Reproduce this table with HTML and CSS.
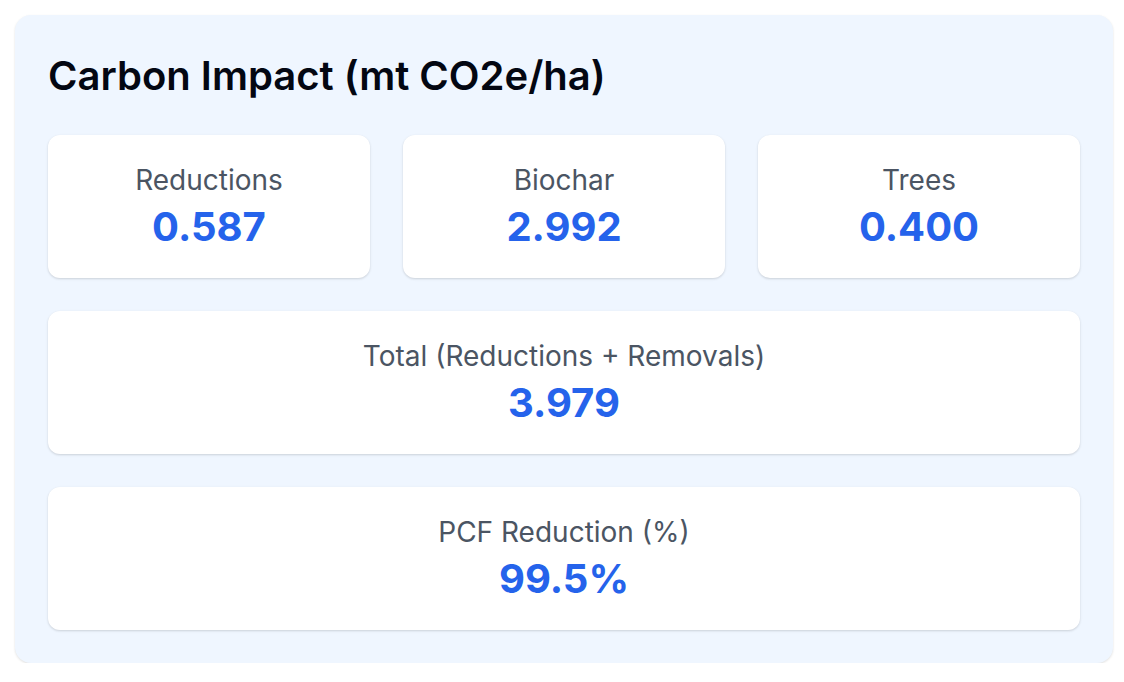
FILE: index.html
```html
<!DOCTYPE html>
<html lang="en">
<head>
<meta charset="utf-8">
<title>Carbon Impact</title>
<link rel="stylesheet" href="styles.css">
</head>
<body>
<section class="panel">
  <h2 class="title">Carbon Impact (mt CO2e/ha)</h2>
  <div class="grid-3">
    <div class="card">
      <div class="label">Reductions</div>
      <div class="value">0.587</div>
    </div>
    <div class="card">
      <div class="label">Biochar</div>
      <div class="value">2.992</div>
    </div>
    <div class="card">
      <div class="label">Trees</div>
      <div class="value">0.400</div>
    </div>
  </div>
  <div class="card">
    <div class="label">Total (Reductions + Removals)</div>
    <div class="value">3.979</div>
  </div>
  <div class="card">
    <div class="label">PCF Reduction (%)</div>
    <div class="value">99.5%</div>
  </div>
</section>
</body>
</html>
```
FILE: styles.css
```css
html, body {
  margin: 0;
  padding: 0;
  background: #ffffff;
}
body {
  font-family: Inter, "Liberation Sans", sans-serif;
  padding: 15px 11px 0 15px;
}
.panel {
  background: #eff6ff;
  border-radius: 16px;
  padding: 33px;
  display: flex;
  flex-direction: column;
  gap: 33px;
  box-shadow: 0 1px 3px rgba(0, 0, 0, 0.08), 0 1px 2px rgba(0, 0, 0, 0.05);
}
.title {
  margin: 4px 0 2px 0;
  font-size: 40px;
  line-height: 48px;
  font-weight: 600;
  color: #030712;
}
.grid-3 {
  display: grid;
  grid-template-columns: repeat(3, 1fr);
  gap: 33px;
}
.card {
  background: #ffffff;
  border-radius: 12px;
  padding: 25px;
  text-align: center;
  box-shadow: 0 1px 3px rgba(0, 0, 0, 0.1), 0 1px 2px rgba(0, 0, 0, 0.06);
}
.label {
  font-size: 28px;
  line-height: 40px;
  color: #4b5563;
}
.value {
  font-size: 40px;
  line-height: 53px;
  font-weight: 700;
  color: #2563eb;
}
```
